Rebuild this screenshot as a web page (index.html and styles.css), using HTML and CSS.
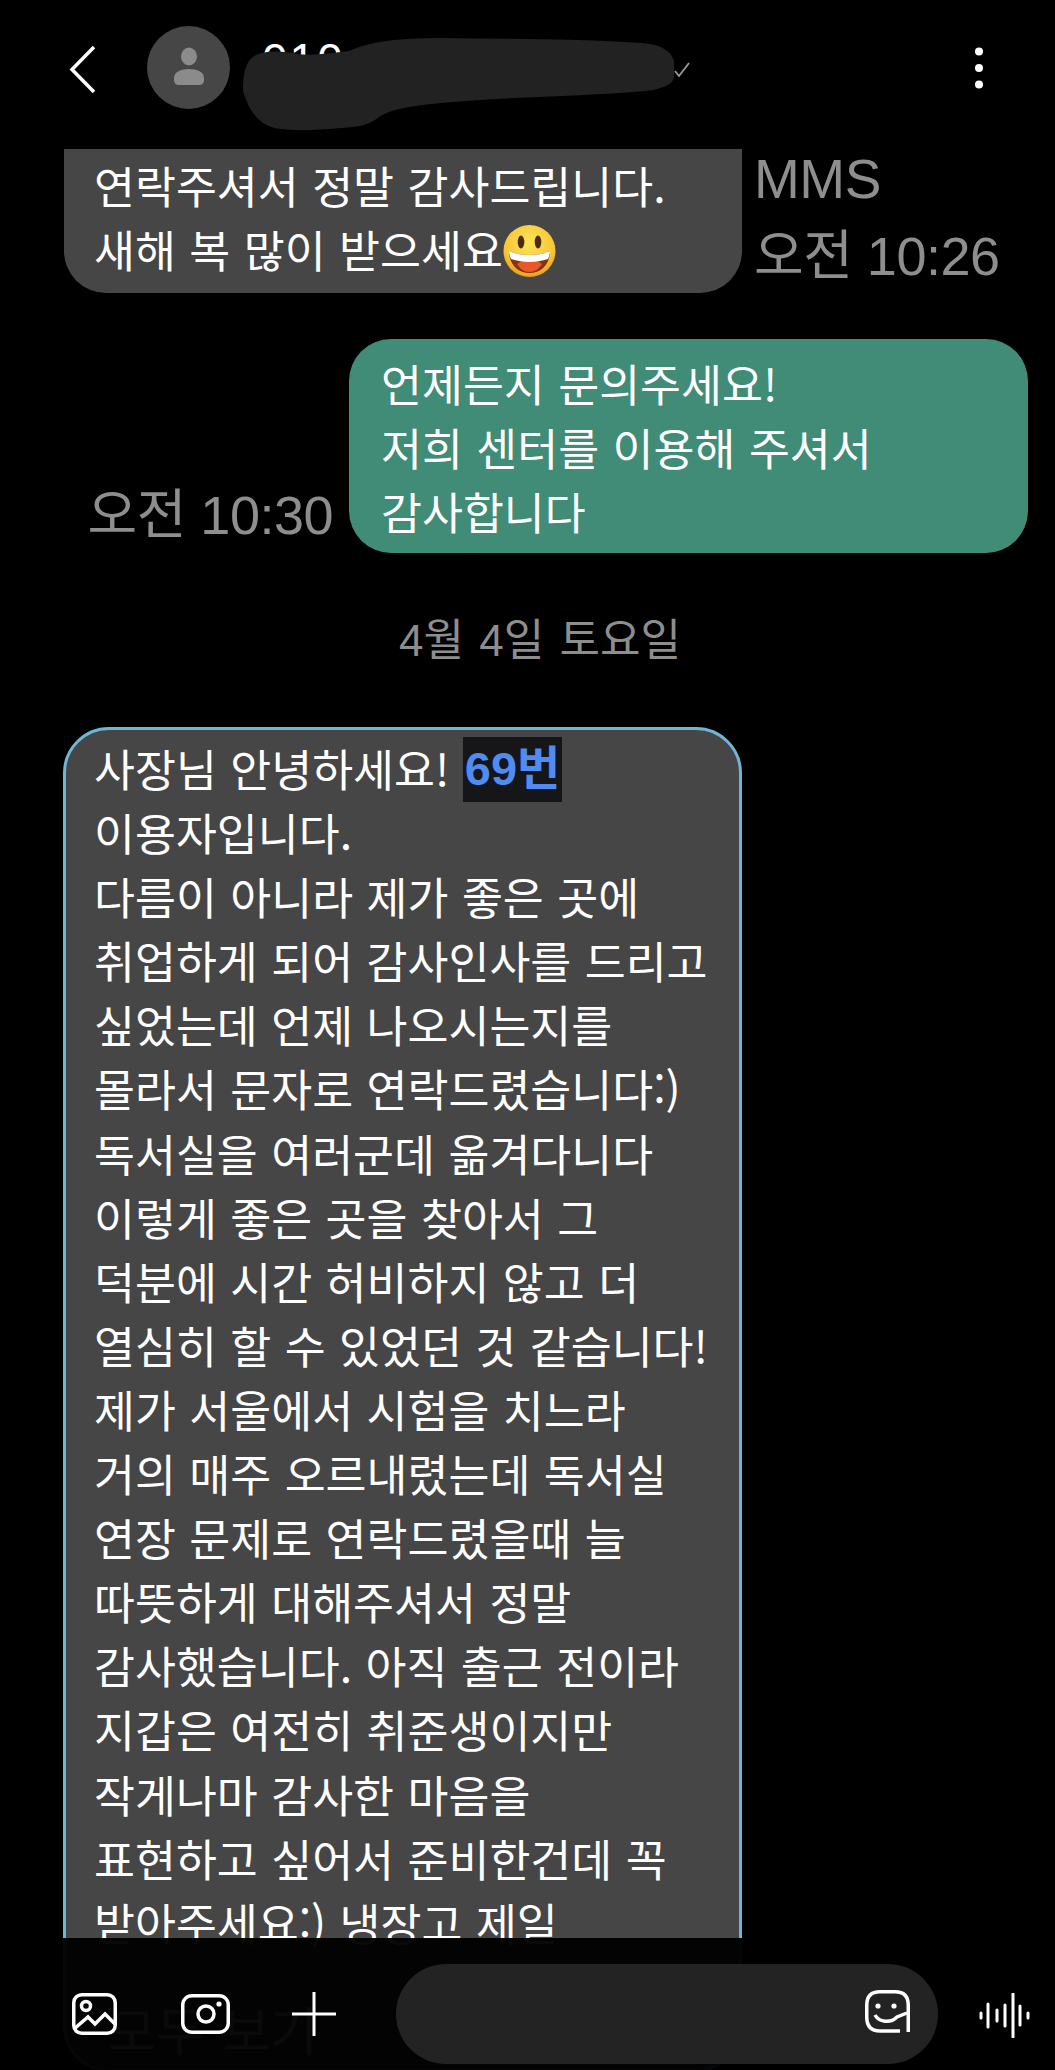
FILE: index.html
```html
<!DOCTYPE html>
<html lang="ko">
<head>
<meta charset="utf-8">
<title>메시지</title>
<link rel="stylesheet" href="styles.css">
</head>
<body>
<div class="screen">
  <header class="header">
    <svg class="back" viewBox="0 0 27 49"><path d="M25 2 3 24.500 25 47"/></svg>
    <svg class="avatar" viewBox="0 0 83 83"><circle cx="41.500" cy="41.500" r="41.500" class="avatar-bg"/><ellipse cx="42" cy="30.500" rx="8" ry="9" class="avatar-fg"/><path d="M27 52c0-6 7-9 15-9s15 3 15 9v2c0 3-2 5-5 5H32c-3 0-5-2-5-5z" class="avatar-fg"/></svg>
    <span class="name">010</span>
    <svg class="chev" viewBox="0 0 16 15"><path d="M1 9l4 5L15 1"/></svg>
    <svg class="dots" viewBox="0 0 10 42"><circle cx="5" cy="4.500" r="4"/><circle cx="5" cy="21" r="4"/><circle cx="5" cy="37.500" r="4"/></svg>
  </header>
  <svg class="blob" viewBox="0 0 436 100"><path d="M2 58C2 42 4 30 12 24C20 18 36 17 56 21C72 23 90 20 108 18C130 8 160 5 200 5C270 6 340 6 400 10C420 11 430 18 433 28V44C432 52 420 56 405 58C350 63 290 63 225 68C170 72 150 76 138 84C128 92 118 94 100 95C80 97 55 98 40 96C22 94 10 84 2 58Z"/></svg>

  <main class="thread">
    <div class="row-in">
      <div class="bubble first">연락주셔서 정말 감사드립니다.<br>새해 복 많이 받으세요<svg class="emoji" viewBox="0 0 53 52"><defs><radialGradient id="face" cx="50%" cy="35%" r="70%"><stop offset="0" stop-color="#fde45c"/><stop offset=".7" stop-color="#f7c534"/><stop offset="1" stop-color="#e38d1e"/></radialGradient></defs><circle cx="26.500" cy="26" r="26" fill="url(#face)"/><ellipse cx="18" cy="17" rx="3.300" ry="6.500" fill="#4a2c0c"/><ellipse cx="35" cy="17" rx="3.300" ry="6.500" fill="#4a2c0c"/><path d="M6 26c7 3 14 4 20.500 4S40 29 47 26c0 14-9 22-20.500 22S6 40 6 26z" fill="#8a3208"/><path d="M14 39c4-3 8-4 12.500-4S35 36 39 39c-3 5-7 8-12.500 8S17 44 14 39z" fill="#e8562a"/><path d="M6 26c7 3 14 4 20.500 4S40 29 47 26c0 3-1 6-2 8-6 2-12 3-18.500 3S14 36 8 34c-1-2-2-5-2-8z" fill="#fff"/></svg></div>
      <div class="meta"><span class="mms">MMS</span><span>오전 10:26</span></div>
    </div>

    <div class="row-out">
      <span class="time">오전 10:30</span>
      <div class="bubble sent">언제든지 문의주세요!<br>저희 센터를 이용해 주셔서<br>감사합니다</div>
    </div>

    <div class="date">4월 4일 토요일</div>

    <div class="bubble card">사장님 안녕하세요! <mark class="hit">69번</mark><br>이용자입니다.<br>다름이 아니라 제가 좋은 곳에<br>취업하게 되어 감사인사를 드리고<br>싶었는데 언제 나오시는지를<br>몰라서 문자로 연락드렸습니다:)<br>독서실을 여러군데 옮겨다니다<br>이렇게 좋은 곳을 찾아서 그<br>덕분에 시간 허비하지 않고 더<br>열심히 할 수 있었던 것 같습니다!<br>제가 서울에서 시험을 치느라<br>거의 매주 오르내렸는데 독서실<br>연장 문제로 연락드렸을때 늘<br>따뜻하게 대해주셔서 정말<br>감사했습니다. 아직 출근 전이라<br>지갑은 여전히 취준생이지만<br>작게나마 감사한 마음을<br>표현하고 싶어서 준비한건데 꼭<br>받아주세요:) 냉장고 제일
      <div class="more">모두 보기</div>
    </div>
  </main>

  <footer class="bar">
    <div class="tools">
      <svg class="ic ic-gal" viewBox="0 0 45 42"><rect x="1.750" y="1.750" width="41.500" height="38.500" rx="8"/><circle cx="14" cy="13" r="4.500"/><path d="M2 36l14-12 7 7 10-10 10 10"/></svg>
      <svg class="ic ic-cam" viewBox="0 0 49 40"><rect x="1.750" y="1.750" width="45.500" height="36.500" rx="9"/><circle cx="25" cy="20" r="8"/><circle cx="38" cy="10" r="2.600" class="fill"/></svg>
      <svg class="ic ic-plus" viewBox="0 0 44 44"><path d="M22 0v44M0 22h44"/></svg>
    </div>
    <div class="input">
      <svg class="ic ic-face" viewBox="0 0 45 43"><path d="M35 41H15C6 41 1.750 36 1.750 27V15C1.750 6 6 1.750 15 1.750H30C39 1.750 43.250 6 43.250 15V42"/><circle cx="13" cy="16" r="2.600" class="fill"/><circle cx="29" cy="16" r="2.600" class="fill"/><path d="M10 25C14 32 25 34 32 27L42 23"/></svg>
    </div>
    <svg class="ic ic-wave" viewBox="0 0 52 45"><path d="M2 20v5M9 11v23M18 17v11M26 12v21M34 1v43M41 13v19M49 20v5"/></svg>
  </footer>
</div>
</body>
</html>
```

FILE: styles.css
```css
* { box-sizing: border-box; }
html, body { margin: 0; background: #000; }
.screen {
  position: relative;
  width: 1055px;
  height: 2070px;
  overflow: hidden;
  background: #000;
  color: #fff;
  font-family: "Noto Sans CJK KR", "Liberation Sans", sans-serif;
  font-size: 44.5px;
  line-height: 64px;
  word-spacing: 1px;
}

/* header */
.header {
  display: flex;
  align-items: flex-start;
  height: 149px;
  padding: 26px 71px 0 69px;
}
.back { width: 27px; height: 49px; margin-top: 19px; fill: none; stroke: #fff; stroke-width: 3.500; }
.avatar { width: 83px; height: 83px; margin-left: 51px; flex: none; }
.avatar-bg { fill: #464646; }
.avatar-fg { fill: #8b8b8b; }
.name { margin: 4px 0 0 32px; line-height: 60px; font-family: "Liberation Sans", sans-serif; font-weight: 400; font-size: 46px; letter-spacing: 2px; height: 60px; overflow: hidden; }
.chev { width: 16px; height: 15px; margin: 36px 0 0 329px; fill: none; stroke: #9a9a9a; stroke-width: 1.800; }
.dots { width: 10px; height: 42px; margin: 21px 0 0 auto; fill: #fff; }
.blob { position: absolute; left: 241px; top: 33px; width: 436px; height: 100px; fill: #222; }

/* thread */
.thread { display: flex; flex-direction: column; }
.bubble { background: #464646; white-space: nowrap; }
.row-in { display: flex; height: 144px; padding-left: 64px; }
.first { width: 678px; height: 144px; padding: 4px 30px 0; border-radius: 0 0 42px 42px; }
.emoji { width: 53px; height: 52px; vertical-align: -9px; }
.meta { display: flex; flex-direction: column; gap: 17px; margin: 0 0 0 12px; color: #8e8e8e; font-family: "Liberation Sans", "Noto Sans CJK KR", sans-serif; font-size: 54px; line-height: 60px; word-spacing: 0; letter-spacing: -0.500px; white-space: nowrap; }
.mms { font-size: 55px; }

.row-out { display: flex; align-items: flex-end; justify-content: flex-end; gap: 16px; margin-top: 46px; padding-right: 27px; }
.time { color: #8e8e8e; font-family: "Liberation Sans", "Noto Sans CJK KR", sans-serif; font-size: 54px; line-height: 76px; word-spacing: 0; letter-spacing: -0.500px; }
.sent { width: 679px; height: 214px; padding: 12px 32px 0; background: #408c76; border-radius: 42px; }

.date { margin-top: 56px; padding-left: 25px; text-align: center; color: #8e8e8e; font-size: 44px; word-spacing: 3px; font-family: "Liberation Sans", "Noto Sans CJK KR", sans-serif; }

.card { width: 679px; min-height: 1345px; margin: 54px 0 0 63px; padding: 6px 28px 0; border: 3px solid #6fb5d8; border-radius: 46px; line-height: 64.100px; }
.hit { display: inline-block; height: 65px; margin: 1px 0 -2px; padding: 0 2px; background: #161618; color: #4f8bf0; font-family: "Liberation Sans", "Noto Sans CJK KR", sans-serif; font-size: 47px; font-weight: 700; line-height: 64px; vertical-align: top; word-spacing: 0; }
.more { margin-top: 12px; padding: 26px 0 0 14px; border-top: 2px solid #6a6a6a; font-size: 52px; word-spacing: 4px; line-height: 70px; }

/* bottom bar */
.bar {
  position: absolute;
  left: 0;
  right: 0;
  top: 1938px;
  bottom: 0;
  display: flex;
  align-items: flex-start;
  padding: 26px 24px 0 72px;
  background: rgba(0, 0, 0, 0.96);
}
.ic { fill: none; stroke: #fff; stroke-width: 3.500; flex: none; }
.ic .fill { fill: #fff; stroke: none; }
.tools { display: flex; align-items: center; gap: 64px; width: 324px; height: 100px; }
.ic-gal { width: 45px; height: 42px; }
.ic-cam { width: 49px; height: 40px; }
.ic-plus { width: 44px; height: 44px; margin-left: -2px; stroke-width: 3; }
.input { display: flex; align-items: flex-start; justify-content: flex-end; width: 542px; height: 100px; padding: 26px 28px 0 0; background: #232323; border-radius: 50px; }
.ic-face { width: 45px; height: 43px; }
.ic-wave { width: 52px; height: 45px; margin: 29px 0 0 41px; stroke-width: 3; stroke-linecap: round; }
```
